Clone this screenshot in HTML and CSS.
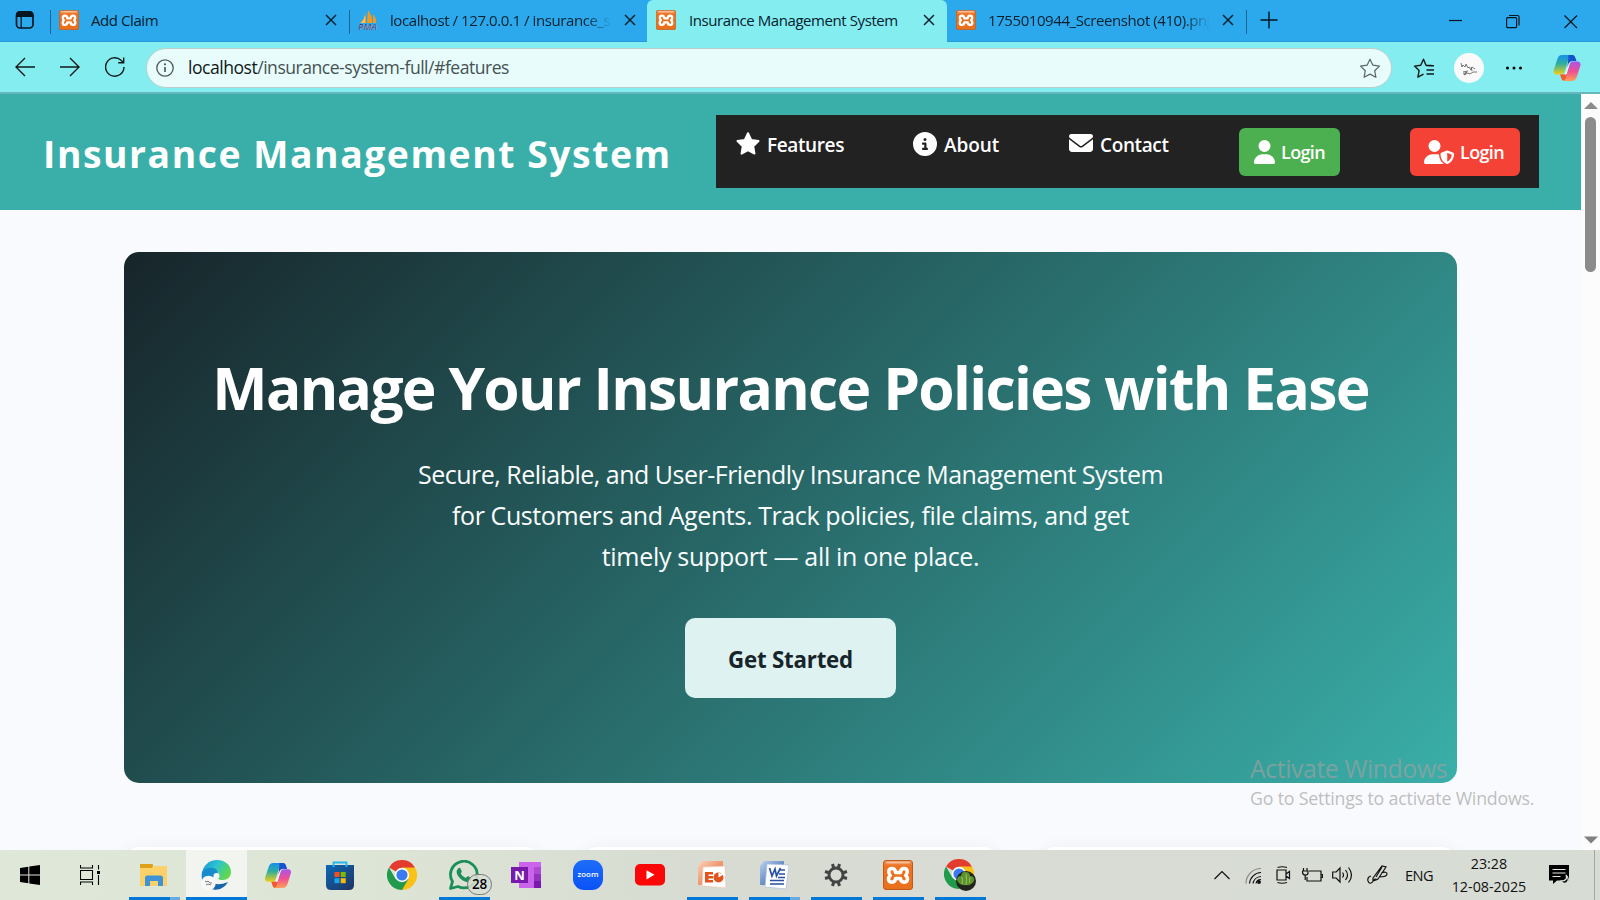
FILE: index.html
```html
<!DOCTYPE html>
<html lang="en">
<head>
<meta charset="utf-8">
<title>Insurance Management System</title>
<link rel="stylesheet" href="styles.css">
</head>
<body>
<svg class="defs" width="0" height="0">
  <defs>
    <linearGradient id="orange" x1="0" y1="0" x2="0" y2="1"><stop offset="0" stop-color="#f0935a"/><stop offset=".2" stop-color="#ee7222"/><stop offset="1" stop-color="#e9701c"/></linearGradient>
    <linearGradient id="cpA" x1="0" y1="0" x2="0" y2="1"><stop offset="0" stop-color="#1590ee"/><stop offset=".45" stop-color="#2fae9c"/><stop offset="1" stop-color="#f2cf16"/></linearGradient>
    <linearGradient id="cpB" x1="0" y1="0" x2="0" y2="1"><stop offset="0" stop-color="#a755ec"/><stop offset=".5" stop-color="#ef4f94"/><stop offset="1" stop-color="#ffa056"/></linearGradient>
    <linearGradient id="edgeTop" x1="0" y1="0" x2="1" y2=".5"><stop offset="0" stop-color="#1a8fd8"/><stop offset=".5" stop-color="#2cc4d0"/><stop offset="1" stop-color="#5fd84e"/></linearGradient>
    <linearGradient id="store" x1="0" y1="0" x2="1" y2="1"><stop offset="0" stop-color="#0b68b8"/><stop offset="1" stop-color="#22335f"/></linearGradient>
    <linearGradient id="zoomBg" x1="0" y1="0" x2="0" y2="1"><stop offset="0" stop-color="#1d6dfa"/><stop offset="1" stop-color="#0b52f5"/></linearGradient>
    <linearGradient id="word" x1="0" y1="0" x2="1" y2="1"><stop offset="0" stop-color="#b9d3f0"/><stop offset="1" stop-color="#2553a0"/></linearGradient>
    <linearGradient id="ppt" x1="0" y1="0" x2="1" y2="1"><stop offset="0" stop-color="#fbd3bd"/><stop offset="1" stop-color="#e25b25"/></linearGradient>
    <symbol id="xampp" viewBox="0 0 30 30">
      <rect x=".5" y=".5" width="29" height="29" rx="2.5" fill="url(#orange)" stroke="#c25a17"/>
      <rect x="3" y="1.6" width="24" height="2" rx="1" fill="#f8bd97"/>
      <path d="M12.500 12.500Q12.300 8.500 9 8.500Q5.800 8.500 5.800 11.500Q5.800 14 7.300 15.500Q5.500 17 5.500 19.200Q5.700 22.200 8.700 22.200Q12.300 22.200 12.500 18.500H17.500Q17.700 22.200 21.300 22.200Q24.300 22.200 24.500 19.200Q24.500 17 22.700 15.500Q24.200 14 24.200 11.500Q24.200 8.500 21 8.500Q17.700 8.500 17.500 12.500Z" fill="none" stroke="#fff" stroke-width="3.500" stroke-linejoin="round"/>
    </symbol>
    <symbol id="copilot" viewBox="0 0 28 28">
      <path d="M18 1h-3l5 6h3.500L22 3.500C21.300 1.700 20 1 18 1z" fill="#1743b8"/>
      <path d="M17.500 1H9C6.500 1 5.200 2.600 4.300 5.200L.8 15.800C-.1 18.700 1 20.500 3.800 20.500h4c2.200 0 3.300-1.300 4-3.500L15.500 5c.7-2.200 1.500-3.600 4-4z" fill="url(#cpA)"/>
      <path d="M15.500 1H19c1.800 0 2.700 1 3.200 2.800L23 7h-3.500c-2 0-3.200 1-3.800 3l-1.200 3.500z" fill="#1552d0"/>
      <path d="M7 20.500l1.500 4.300C9.200 26.500 10.300 27 12 27h3l4-7z" fill="#f4582c"/>
      <path d="M11 27h8c2.500 0 3.900-1.500 4.800-4.200l3.400-10.500c1-3-.2-4.800-3-4.800h-4c-2.200 0-3.200 1.300-4 3.500L13 22.800c-.6 2.300-1.300 3.800-3 4.200z" fill="url(#cpB)"/>
      <path d="M15.800 9.500L11.500 20.500h1.800L17.500 8z" fill="#fff" opacity=".75"/>
    </symbol>
    <symbol id="chrome" viewBox="0 0 30 30">
      <path d="M15 15L2 7.500A15 15 0 0 1 28 7.500z" fill="#e33b2e"/>
      <path d="M15 15l13-7.500A15 15 0 0 1 15 30z" fill="#fbc116"/>
      <path d="M15 15v0l6.500 3.700L15 30A15 15 0 0 1 2 7.500l6.500 11.300z" fill="#219a4b"/>
      <path d="M15 7.500h13l-7 5z" fill="#fbc116"/>
      <circle cx="15" cy="15" r="7.200" fill="#fff"/><circle cx="15" cy="15" r="5.600" fill="#3a7cf0"/>
    </symbol>
    <symbol id="close" viewBox="0 0 12 12"><path d="M1 1l10 10M11 1L1 11" fill="none" stroke="#0b2230" stroke-width="1.500"/></symbol>
    <symbol id="person" viewBox="0 0 448 512"><path d="M224 256a128 128 0 1 0 0-256 128 128 0 1 0 0 256zm-45.700 48C79.800 304 0 383.800 0 482.300 0 498.700 13.300 512 29.700 512h388.600c16.400 0 29.700-13.300 29.700-29.700 0-98.500-79.800-178.300-178.300-178.300z"/></symbol>
  </defs>
</svg>

<div class="tabs">
  <div class="workspace"><svg width="20" height="20" viewBox="0 0 20 20"><rect x="1.500" y="2" width="16.500" height="16" rx="3.500" fill="none" stroke="#06151f" stroke-width="1.700"/><path d="M1 7V5q0-4 4-4h9.500q4 0 4 4v2z" fill="#06151f"/><path d="M6.200 7v11" stroke="#06151f" stroke-width="1.300"/></svg></div>
  <div class="tab"><svg class="fav"><use href="#xampp"/></svg><span class="tab-title">Add Claim</span><svg class="x"><use href="#close"/></svg></div>
  <div class="tab divided">
    <svg class="fav" viewBox="0 0 20 20"><path d="M8 1.500Q8 8 2 13h6zM10 0q5 7 4 13H9zM15 4q4 5 3 9h-3z" fill="#f59a1c"/><path d="M7 5Q6 10 3 13h4z" fill="#fac36b"/><text x="0" y="19.500" class="pma" textLength="19" lengthAdjust="spacingAndGlyphs">PMA</text></svg>
    <span class="tab-title fade">localhost / 127.0.0.1 / insurance_s</span><svg class="x"><use href="#close"/></svg></div>
  <div class="tab active"><svg class="fav"><use href="#xampp"/></svg><span class="tab-title">Insurance Management System</span><svg class="x"><use href="#close"/></svg></div>
  <div class="tab"><svg class="fav"><use href="#xampp"/></svg><span class="tab-title fade">1755010944_Screenshot (410).png</span><svg class="x"><use href="#close"/></svg></div>
  <div class="newtab"><svg width="18" height="18" viewBox="0 0 18 18"><path d="M9 .5v17M.5 9h17" stroke="#06151f" stroke-width="1.400"/></svg></div>
  <div class="wincontrols">
    <svg width="58" height="42" viewBox="0 0 58 42"><path d="M23 20.500h13" stroke="#06151f" stroke-width="1.200"/></svg>
    <svg width="58" height="42" viewBox="0 0 58 42"><g fill="none" stroke="#06151f" stroke-width="1.200"><rect x="22.600" y="17.600" width="10" height="10" rx="1"/><path d="M25 15.500h8.500q1.500 0 1.500 1.500v8.500"/></g></svg>
    <svg width="58" height="42" viewBox="0 0 58 42"><path d="M22.500 15.500l12.500 12.500M35 15.500L22.500 28" stroke="#06151f" stroke-width="1.200"/></svg>
  </div>
</div>

<div class="toolbar">
  <div class="navbtns">
    <svg width="20" height="20" viewBox="0 0 20 20"><path d="M20 10H1M10 1L1 10l9 9"/></svg>
    <svg width="20" height="20" viewBox="0 0 20 20"><path d="M0 10h19M10 1l9 9-9 9"/></svg>
    <svg width="20" height="20" viewBox="0 0 20 20"><path d="M19 10a9.200 9.200 0 1 1-3-6.800l2.500 2.300M18.700.5v5.300h-5.500"/></svg>
  </div>
  <div class="address">
    <svg width="18" height="18" viewBox="0 0 18 18"><circle cx="9" cy="9" r="8.200" fill="none" stroke="#50595a" stroke-width="1.300"/><path d="M9 8v5" stroke="#50595a" stroke-width="1.700"/><circle cx="9" cy="5.300" r="1.100" fill="#50595a"/></svg>
    <span class="url"><b>localhost</b>/insurance-system-full/#features</span>
    <svg width="22" height="21" viewBox="0 0 22 21"><path d="M11 1.200l2.900 6 6.600.9-4.800 4.600 1.200 6.600-5.900-3.200-5.900 3.200 1.200-6.600L1.500 8.100l6.600-.9z" fill="none" stroke="#5b6566" stroke-width="1.200" stroke-linejoin="round"/></svg>
  </div>
  <svg class="favlist" width="22" height="21" viewBox="0 0 22 21"><path d="M18.500 7.500L13 7.200l-2.500-6-2.800 6-6.200.9 4.600 4.500-1.200 6.600 5.600-3M13 7.800h8M13.500 12h7.500M13.500 16h7.500" fill="none" stroke="#10191a" stroke-width="1.400" stroke-linejoin="round"/></svg>
  <svg class="profile" width="30" height="30" viewBox="0 0 30 30"><circle cx="15" cy="15" r="15" fill="#fafafa"/><path d="M7 10l1 4 1-2 2 2 1-3 2 4 1-1M15 14l2 3 1-3 3 2M17 14l1 4M9 21l4-2-3 3 4-2 2 1 3-2 4 0M9 19l5-1" fill="none" stroke="#666" stroke-width=".9"/></svg>
  <svg class="dots" width="18" height="6" viewBox="0 0 18 6"><circle cx="2.500" cy="3" r="1.500"/><circle cx="9" cy="3" r="1.500"/><circle cx="15.500" cy="3" r="1.500"/></svg>
  <svg class="cop"><use href="#copilot"/></svg>
</div>

<div class="viewport">
  <div class="page">
    <header class="header">
      <div class="brand">Insurance Management System</div>
      <nav class="nav">
        <a class="item features"><svg width="24" height="24" viewBox="0 0 24 24"><path d="M12 1.200l3.200 6.700 7.300 1.100-5.300 5.200 1.250 7.400L12 18.100l-6.450 3.500 1.250-7.400L1.500 9l7.300-1.100z" stroke="#fff" stroke-width="2" stroke-linejoin="round"/></svg><span>Features</span></a>
        <a class="item about"><svg width="24" height="24" viewBox="0 0 512 512"><path d="M256 512a256 256 0 1 0 0-512 256 256 0 1 0 0 512zm-40-176h24v-64h-24c-13.300 0-24-10.700-24-24s10.700-24 24-24h48c13.300 0 24 10.700 24 24v88h8c13.300 0 24 10.700 24 24s-10.700 24-24 24h-80c-13.300 0-24-10.700-24-24s10.700-24 24-24zm40-208a32 32 0 1 1 0 64 32 32 0 1 1 0-64z"/></svg><span>About</span></a>
        <a class="item contact"><svg width="24" height="24" viewBox="0 0 512 512"><path d="M48 64C21.500 64 0 85.500 0 112c0 15.100 7.100 29.300 19.200 38.400l217.600 163.200c11.400 8.500 27 8.500 38.400 0l217.600-163.200c12.100-9.100 19.200-23.300 19.200-38.400 0-26.500-21.500-48-48-48zM0 176v208c0 35.300 28.700 64 64 64h384c35.300 0 64-28.700 64-64V176L294.400 339.200c-22.800 17.100-54 17.100-76.800 0z"/></svg><span>Contact</span></a>
        <a class="btn green"><svg width="21" height="24"><use href="#person"/></svg><span>Login</span></a>
        <a class="btn red"><svg width="30" height="24" viewBox="0 0 640 512"><path d="M224 256a128 128 0 1 0 0-256 128 128 0 1 0 0 256zm-45.700 48C79.800 304 0 383.800 0 482.300 0 498.700 13.300 512 29.700 512h388.600c1.800 0 3.500-.2 5.300-.5-76.300-55.100-99.800-141-103.100-200.200-16.100-4.800-33.100-7.300-50.700-7.300zm308.800-78.300l-120 48c-9.100 3.600-15.100 12.500-15.100 22.300 0 63.300 25.900 168.800 134.800 214.200 5.900 2.500 12.600 2.500 18.500 0C614.100 464.800 640 359.300 640 296c0-9.800-6-18.600-15.100-22.300l-120-48c-5.700-2.300-12.100-2.300-17.800 0zM591.400 312c-3.900 50.700-27.200 116.700-95.400 149.700V273.800z"/></svg><span>Login</span></a>
      </nav>
    </header>
    <section class="hero">
      <h1>Manage Your Insurance Policies with Ease</h1>
      <p><span class="l1">Secure, Reliable, and User-Friendly Insurance Management System</span><br><span class="l2">for Customers and Agents. Track policies, file claims, and get</span><br><span class="l3">timely support — all in one place.</span></p>
      <a class="cta">Get Started</a>
    </section>
    <div class="cards"><div></div><div></div><div></div></div>
  </div>
  <div class="scrollbar">
    <svg width="14" height="8" viewBox="0 0 14 8"><path d="M7 0l7 7H0z" fill="#8b8b8b"/></svg>
    <div class="thumb"></div>
    <svg width="14" height="8" viewBox="0 0 14 8"><path d="M7 7.500l7-7H0z" fill="#7f7f7f"/></svg>
  </div>
</div>

<div class="taskbar">
  <div class="start"><svg width="20" height="20" viewBox="0 0 20 20"><path d="M0 3l8.300-1.200v7.700H0zM9.300 1.600L20 0v9.500H9.300zM0 10.500h8.300v7.700L0 17zM9.300 10.500H20V20L9.300 18.400z"/></svg></div>
  <div class="start"><svg width="20" height="20" viewBox="0 0 20 20"><g fill="none" stroke="#000" stroke-width="1.100"><path d="M.5 0v3h12V0M.5 5.500h12v9H.5zM.5 20v-3h12v3M18.500 0v4.500M18.500 10v10"/></g><rect x="17" y="6" width="3" height="3"/></svg></div>
  <div class="apps">
    <div class="app run more"><svg width="28" height="24" viewBox="0 0 28 24"><path d="M0 1h12q1.500 0 1 2l-1 3H0z" fill="#dea016"/><path d="M0 5h12l2-2h13v20H0z" fill="#fdd16a"/><path d="M5 23V15q0-2.500 2.500-2.500h13Q23 12.500 23 15v8h-5v-5h-8v5z" fill="#3d93d5"/></svg></div>
    <div class="app focused"><svg width="30" height="30" viewBox="0 0 30 30"><path d="M1 15C1 6 8 0 16 0c9 0 14 6 14 12 0 5-4 8-8 8-5 0-6-2-5-4 2-4-2-7-6-6-5 1-9 4-10 9z" fill="url(#edgeTop)"/><path d="M1 12c2-3 7-5 11-4 5 1 6 5 4 8l-6 2-3 10C1 24 0 18 1 12z" fill="#178dce"/><path d="M9 15c-1 8 6 12 18 7-4 7-11 9-17 7-3-3-4-9-1-14z" fill="#1566ac"/><circle cx="7.500" cy="23" r="7.300" fill="#f8f8f8"/><circle cx="15.500" cy="16" r="3" fill="#f5f7f4"/><path d="M4 21l2 1 1-1 2 2 2 0M5 25l2-1 3 1" stroke="#777" fill="none"/></svg></div>
    <div class="app"><svg width="28" height="27"><use href="#copilot"/></svg></div>
    <div class="app"><svg width="30" height="30" viewBox="0 0 30 30"><path d="M1 5h28v20q0 5-5 5H6q-5 0-5-5z" fill="url(#store)"/><path d="M9.500 12h5v5h-5z" fill="#f25022"/><path d="M15.700 12h5v5h-5z" fill="#7fba00"/><path d="M9.500 18.200h5v5h-5z" fill="#19a5ee"/><path d="M15.700 18.200h5v5h-5z" fill="#ffb900"/><path d="M8.500 7V2.500h13V7" fill="none" stroke="#24b6ed" stroke-width="1.800"/></svg></div>
    <div class="app"><svg width="30" height="30"><use href="#chrome"/></svg></div>
    <div class="app run"><svg width="30" height="30" viewBox="0 0 30 30"><path d="M1.500 28.500l2-7A13.300 13.300 0 1 1 9 26.500z" fill="none" stroke="#1b8f5a" stroke-width="2.800" stroke-linejoin="round"/><path d="M9 8.500q1.500-1.500 2.500 0l1.200 2.800q.3 1-1 2.200 1.800 3.500 5 4.600l1.600-1.600q.7-.5 1.500 0l2.500 1.400q1 .7-.2 2.500-2.400 2.500-6 1.100-6-2.500-8.200-7.800Q7 10.500 9 8.500z" fill="#1b8f5a"/></svg><span class="count">28</span></div>
    <div class="app"><svg width="30" height="26" viewBox="0 0 30 26"><path d="M8 0h22v26H8z" fill="#ca64ea"/><path d="M23 5h7v7h-7z" fill="#ae4bd5"/><path d="M23 12h7v7h-7z" fill="#9332bf"/><path d="M23 19h7v7h-7z" fill="#7719aa"/><rect y="5" width="17" height="16" fill="#7719aa"/><text x="8.500" y="17.500" class="nletter">N</text></svg></div>
    <div class="app"><svg width="30" height="30" viewBox="0 0 30 30"><rect width="30" height="30" rx="11" fill="url(#zoomBg)"/><text x="15" y="17" class="zoomtext" textLength="21" lengthAdjust="spacingAndGlyphs">zoom</text></svg></div>
    <div class="app"><svg width="30" height="22" viewBox="0 0 30 22"><rect width="30" height="21.500" rx="5" fill="#fb0707"/><path d="M11.500 6.200v9.200l8-4.600z" fill="#fff"/></svg></div>
    <div class="app run"><svg width="30" height="30" viewBox="0 0 30 30"><path d="M5 1h21v24H1V6z" fill="url(#ppt)"/><path d="M6 7l22-1 1 22-24-2z" fill="#fff" stroke="#efc4ae" stroke-width=".7"/><path d="M8 12h8v2.500h-4.500v1.500H16v2.500h-4.500V20H16v2.500H8z" fill="#e4521b"/><circle cx="21.500" cy="17.500" r="5" fill="#e4521b"/><path d="M21.500 17.500v-5l5 2z" fill="#fff"/></svg></div>
    <div class="app run more"><svg width="30" height="30" viewBox="0 0 30 30"><path d="M5 1h20v24H1V6z" fill="url(#word)"/><path d="M8 4l22 1-3 24-21-2z" fill="#fff" stroke="#a9bfdf" stroke-width=".7"/><path d="M10.500 8l2.500 8 3-7 1.500 7 4-8M21 10h5M20 14h6M19 17.500h7M11 20.500h14M11 24h14" fill="none" stroke="#2850a5" stroke-width="1.700"/></svg></div>
    <div class="app run"><svg width="24" height="24" viewBox="0 0 24 24"><circle cx="12" cy="12" r="7" fill="none" stroke="#444" stroke-width="2.900"/><path d="M8.500 1l1.200 4M15.500 1l-1.200 4M8.500 23l1.200-4M15.500 23l-1.200-4M1 8.500l4 1.200M1 15.500l4-1.200M23 8.500l-4 1.200M23 15.500l-4-1.200" stroke="#444" stroke-width="3"/></svg></div>
    <div class="app run"><svg width="30" height="30"><use href="#xampp"/></svg></div>
    <div class="app run"><svg width="32" height="32" viewBox="0 0 32 32"><use href="#chrome" width="30" height="30"/><circle cx="22" cy="22" r="10" fill="#20251b"/><path d="M13 21q0-4 4-4 1-5 5-4 4 0 4 4 5 0 4 5-3 5-8 4-7 1-9-5z" fill="#5c9130"/><path d="M18 18q1 4 0 7M22 15q1 5 0 11M26 18q-1 4 0 6" stroke="#9bc654" fill="none" stroke-width="1"/></svg></div>
  </div>
  <div class="tray">
    <svg width="16" height="10" viewBox="0 0 16 10"><path d="M.5 9L8 1.500 15.500 9"/></svg>
    <svg class="wifi" width="17" height="17" viewBox="0 0 17 17"><g stroke="#888"><path d="M1 16.500A15 15 0 0 1 16 1.500"/></g><path d="M4.500 16.500A12 12 0 0 1 16 5.500M8 16.500A8.500 8.500 0 0 1 16 9.500M11 16.500a5 5 0 0 1 5-4"/><circle cx="14" cy="15" r="1.300" fill="#111"/></svg>
    <svg class="cam" width="15" height="18" viewBox="0 0 15 18"><path d="M1 4h9v10H1zM10 8l3.500-2.500v7L10 10M1.500 1.500Q6 0 11 1.500M1.500 16.500q4.500 1.500 9.500 0"/></svg>
    <svg class="bat" width="21" height="14" viewBox="0 0 21 14"><path d="M7 3h12v10H5V9M19 6.500h1.500v3H19M1.500 0v3M5 0v3M.5 3h5.500v2Q6 7 3.300 7 .5 7 .5 4zM3.200 7v5"/></svg>
    <svg class="snd" width="21" height="18" viewBox="0 0 21 18"><path d="M.7 6h3.500L8 2v14l-3.800-4H.7zM10.500 6.500q2 2.500 0 5M13.500 4q4 5 0 10M16.500 1.500q6 7.500 0 15"/></svg>
    <svg class="pen" width="21" height="20" viewBox="0 0 21 20"><path d="M6 13l9-12 4 1-8 12-5 2zM9 12l6-10M4 11q-4 1-3 5 2 5 6-1 1-2 3 0M14 8q6-2 6 1t-8 3"/></svg>
    <span class="lang">ENG</span>
    <div class="clock"><span>23:28</span><span>12-08-2025</span></div>
    <svg class="notif" width="21" height="20" viewBox="0 0 21 20"><path d="M0 0h20v15.500H8L4 19v-3.500H0z" fill="#000" stroke="none"/><path d="M3.500 4.500h13M3.500 8h13M3.500 11.500h8" stroke="#e5e8e2"/><path d="M17 10q2 6-5 6 3 4 6 1.500 3-3-1-7.500z" fill="#111" stroke="#dfe3dc"/></svg>
  </div>
</div>

<div class="watermark"><div class="w1">Activate Windows</div><div class="w2">Go to Settings to activate Windows.</div></div>
</body>
</html>
```

FILE: styles.css
```css
* { box-sizing: border-box; }
body {
  margin: 0;
  width: 1600px;
  height: 900px;
  overflow: hidden;
  display: flex;
  flex-direction: column;
  font-family: "Open Sans", "Noto Sans", sans-serif;
  position: relative;
}
svg { display: block; flex: none; }
.defs { position: absolute; }
span { white-space: nowrap; }

/* Tab strip */
.tabs { display: flex; height: 42px; background: #2ca9ec; flex: none; box-shadow: inset 0 -1px #269bdc; }
.workspace { width: 50px; padding: 10px 0 0 15px; }
.tab { width: 299px; height: 42px; display: flex; align-items: center; padding: 0 12px 2px 9px; font-size: 15px; color: #06202d; flex: none; }
.tab:nth-child(2), .tab.divided { background: linear-gradient(#1b668f, #1b668f) 0 10px / 1px 24px no-repeat; }
.tab.active { background: #84edf0; border-radius: 6px 6px 0 0; margin-left: -1px; width: 300px; padding-left: 10px; }
.fav { width: 20px; height: 20px; margin-right: 12px; }
.tab.active .fav { margin-left: -1px; margin-right: 13px; }
.tab-title { flex: 1; min-width: 0; letter-spacing: -.42px; margin-right: 19px; padding-bottom: 1px; }
.fade { -webkit-mask-image: linear-gradient(90deg, #000 88%, transparent); mask-image: linear-gradient(90deg, #000 88%, transparent); margin-right: 12px; }
.pma { font: italic bold 8px "Open Sans", sans-serif; fill: #393b77; stroke: #dde6f0; stroke-width: .2px; }
.x { width: 12px; height: 12px; }
.newtab { width: 180px; padding: 11px 0 0 14px; background: linear-gradient(#1b668f, #1b668f) 0 10px / 1px 24px no-repeat; }
.wincontrols { display: flex; }

/* Address row */
.toolbar { display: flex; align-items: center; height: 52px; flex: none; background: #84edf0; border-bottom: 2px solid #68b8bb; padding: 2px 20px 0 15px; }
.navbtns { display: flex; gap: 25px; margin-right: 21px; margin-bottom: 2px; }
.navbtns svg { fill: none; stroke: #10191a; stroke-width: 1.4; }
.address { width: 1246px; height: 40px; border: 1px solid #b9cfcf; border-radius: 20px; background: #e8fcfc; display: flex; align-items: center; padding: 0 10px 0 9px; flex: none; }
.url { flex: 1; margin-left: 14px; font-size: 17.6px; color: #465253; letter-spacing: -.5px; padding-bottom: 3px; }
.url b { font-weight: 400; color: #101818; }
.favlist { margin-left: 21px; }
.profile { margin-left: 19px; }
.dots { margin-left: 21px; }
.cop { width: 28px; height: 28px; margin-left: 30px; }

/* Web page */
.viewport { height: 756px; flex: none; display: flex; overflow: hidden; background: #f9fafd; }
.page { width: 1581px; flex: none; }
.header { height: 116px; background: #3aafa9; display: flex; align-items: center; justify-content: space-between; padding: 0 42px 0 43px; }
.brand { font-size: 37.3px; font-weight: 700; color: #fff; letter-spacing: 1.55px; line-height: 50px; white-space: nowrap; padding-top: 4px; }
.nav { width: 823px; height: 73px; background: #222; display: flex; align-items: flex-start; padding: 13px 19px 0 20px; margin-bottom: 1px; color: #fff; font-weight: 600; flex: none; }
.nav svg { fill: #fff; }
.item { display: flex; height: 32px; font-size: 19px; line-height: 34px; letter-spacing: -.38px; gap: 7px; padding-top: 3px; }
.item span { margin-top: -3px; }
.features { width: 177px; }
.about { width: 156px; letter-spacing: -.1px; }
.contact { width: 170px; }
.features svg, .about svg { margin-top: 1px; }
.btn { height: 48px; border-radius: 6px; display: flex; padding: 12px 0 0 15px; gap: 6px; font-size: 18px; line-height: 25px; letter-spacing: -.65px; }
.green { width: 101px; background: #4caf50; margin-right: 70px; }
.red { width: 110px; background: #f44336; padding-left: 14px; }
.hero { width: 1333px; height: 531px; margin: 42px 0 0 124px; border-radius: 15px; background: linear-gradient(135deg, #17252a, #3aafa9); display: flex; flex-direction: column; align-items: center; color: #fff; padding-top: 95px; }
.hero h1 { margin: 0; font-size: 58.7px; line-height: 80px; font-weight: 700; white-space: nowrap; letter-spacing: -1.68px; }
.hero p { margin: 27px 0 0; font-size: 25px; line-height: 41px; text-align: center; color: #fafdfd; }
.l1 { letter-spacing: -.5px; }
.l2 { letter-spacing: -.4px; }
.l3 { letter-spacing: -.3px; }
.cta { width: 211px; height: 80px; margin-top: 41px; border-radius: 10px; background: #def2f1; color: #17252a; font-size: 22.3px; font-weight: 700; line-height: 83px; text-align: center; white-space: nowrap; letter-spacing: -.22px; }
.cards { display: flex; gap: 41px; width: 1333px; margin: 64px 0 0 124px; }
.cards div { flex: 1; height: 200px; border-radius: 15px; background: #fff; box-shadow: 0 4px 20px rgba(0, 0, 0, .07); }
.scrollbar { width: 19px; background: #fcfcfc; display: flex; flex-direction: column; align-items: center; padding: 8px 0 6px; }
.thumb { width: 11px; height: 155px; margin: 7px 0 auto; border-radius: 6px; background: #8b8b8b; }

/* Taskbar */
.taskbar { height: 50px; flex: none; position: relative; z-index: 1; display: flex; background: linear-gradient(90deg, #dfe7d8 0, #dde5d6 23%, #d7dbd2 45%, #d8dcd4 60%, #d7dcd5 100%); }
.start { width: 60px; padding: 15px 0 0 20px; }
.apps { display: flex; gap: 1px; padding-left: 4px; }
.app { width: 61px; height: 50px; display: flex; align-items: center; justify-content: center; position: relative; padding-right: 2px; }
.run { background: linear-gradient(#0078d7, #0078d7) 5px 47px / 51px 3px no-repeat; }
.run.more { background: linear-gradient(90deg, #0078d7 41px, #67abe0 41px) 5px 47px / 51px 3px no-repeat; }
.focused { background: linear-gradient(#0078d7, #0078d7) 0 47px / 61px 3px no-repeat, #f2f5ef; }
.count { position: absolute; left: 33px; top: 24px; width: 25px; height: 21px; border: 1px solid #777; border-radius: 11px; background: rgba(216, 222, 213, .88); font-size: 13.5px; line-height: 19px; text-align: center; color: #000; font-weight: 600; letter-spacing: -.3px; }
.nletter { font: bold 13px "Open Sans", sans-serif; fill: #fff; text-anchor: middle; }
.zoomtext { font: 600 7.5px "Open Sans", sans-serif; fill: #fff; text-anchor: middle; }
.tray { display: flex; align-items: center; margin-left: auto; padding-right: 30px; background: linear-gradient(#a4a8a1, #a4a8a1) calc(100% - 5px) 0 / 1px 50px no-repeat; }
.tray svg { fill: none; stroke: #111; stroke-width: 1.2; }
.wifi { margin-left: 15px; }
.cam { margin-left: 14px; }
.bat { margin-left: 11px; }
.snd { margin-left: 9px; }
.pen { margin-left: 14px; }
.lang { margin-left: 17px; width: 28px; font-size: 14.6px; letter-spacing: -.5px; color: #111; }
.clock { width: 76px; margin: 0 0 0 18px; display: flex; flex-direction: column; align-items: center; font-size: 14.3px; line-height: 23px; color: #111; }
.notif { margin-left: 22px; }

/* Desktop activation notice lies over the page */
.watermark { position: absolute; left: 1250px; top: 751px; color: rgba(160, 160, 160, .68); white-space: nowrap; }
.w1 { font-size: 24.8px; line-height: 34px; letter-spacing: -.4px; }
.w2 { font-size: 17.8px; line-height: 26px; letter-spacing: -.2px; }
```
